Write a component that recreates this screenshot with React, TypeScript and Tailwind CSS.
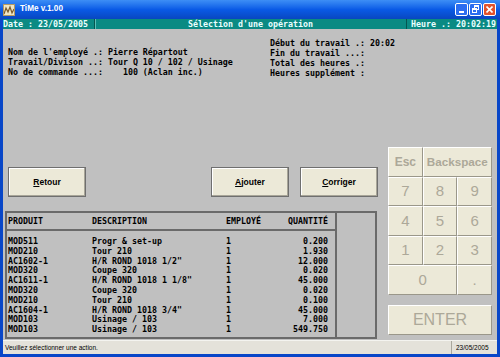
import React from "react";

const mono = "font-['DejaVu_Sans_Mono',monospace] font-bold text-[8.3px]";
const sans = "font-['Liberation_Sans',Arial,sans-serif]";

const rows = [
  ["MOD511", "Progr & set-up", "1", "0.200"],
  ["MOD210", "Tour 210", "1", "1.930"],
  ["AC1602-1", 'H/R ROND 1018 1/2"', "1", "12.000"],
  ["MOD320", "Coupe 320", "1", "0.020"],
  ["AC1611-1", 'H/R ROND 1018 1 1/8"', "1", "45.000"],
  ["MOD320", "Coupe 320", "1", "0.020"],
  ["MOD210", "Tour 210", "1", "0.100"],
  ["AC1604-1", 'H/R ROND 1018 3/4"', "1", "45.000"],
  ["MOD103", "Usinage / 103", "1", "7.000"],
  ["MOD103", "Usinage / 103", "1", "549.750"],
];

const keyCls =
  "flex items-center justify-center bg-[#ece9d8] text-[#aca899] border-t border-l border-t-white border-l-white border-r border-b border-r-[#9a978a] border-b-[#9a978a] " +
  sans;

const ActionButton = ({ first, rest }: { first: string; rest: string }) => (
  <button
    className={`w-[78px] h-[30px] bg-[#ece9d8] border border-[#6f6f6f] shadow-[inset_-1px_-1px_0_#a8a598,inset_1px_1px_0_#ffffff] text-[8.5px] font-bold text-black ${sans}`}
  >
    <span className="underline">{first}</span>
    {rest}
  </button>
);

const TitleBar = () => (
  <div className="h-[19px] flex items-center bg-gradient-to-b from-[#3d8ef5] via-[#0a5ae6] to-[#0847c0] pl-[3px] pr-[4px]">
    <svg width="12" height="12" viewBox="0 0 12 12">
      <rect x="0" y="0" width="12" height="12" fill="#efe6c6" />
      <path d="M1 10 L3 4 L5 8 L7 3 L9 9 L11 5" stroke="#7a5a2a" strokeWidth="1.2" fill="none" />
      <rect x="0.5" y="0.5" width="11" height="11" fill="none" stroke="#b59a62" />
    </svg>
    <span className={`ml-[5px] text-white font-bold text-[8.2px] ${sans}`}>TiMe v.1.00</span>
    <div className="ml-auto flex gap-[1px]">
      <div className="w-[13px] h-[13px] rounded-[2px] border border-white bg-[#2a6df0] flex items-end justify-center pb-[2px]">
        <div className="w-[5px] h-[2px] bg-white" />
      </div>
      <div className="w-[13px] h-[13px] rounded-[2px] border border-white bg-[#2a6df0] relative">
        <div className="absolute left-[4px] top-[1px] w-[5px] h-[5px] border border-white border-t-2" />
        <div className="absolute left-[2px] top-[4px] w-[5px] h-[5px] border border-white border-t-2 bg-[#2a6df0]" />
      </div>
      <div className="w-[13px] h-[13px] rounded-[2px] border border-white bg-[#e1532c] flex items-center justify-center">
        <svg width="7" height="7" viewBox="0 0 7 7">
          <path d="M0.5 0.5 L6.5 6.5 M6.5 0.5 L0.5 6.5" stroke="white" strokeWidth="1.6" />
        </svg>
      </div>
    </div>
  </div>
);

export default function App() {
  return (
    <div className="w-[500px] h-[357px] flex flex-col bg-[#0846c8] overflow-hidden">
      <TitleBar />
      <div className="flex-1 flex flex-col mx-[3px] mb-[3px] bg-[#c0c0c0]">
        <div className={`h-[10px] flex bg-[#0b8a83] text-[#eaffff] leading-[10px] ${mono}`}>
          <div className="w-[92px] border-r border-r-[#055550] shadow-[1px_0_0_#5cc0b8]">Date : 23/05/2005</div>
          <div className="flex-1 text-center">Sélection d'une opération</div>
          <div className="w-[91px] border-l border-l-[#055550] text-right pr-[1px]">Heure .: 20:02:19</div>
        </div>

        <div className={`flex pt-[9px] text-black leading-[10px] whitespace-pre ${mono}`}>
          <div className="mt-[9px] ml-[5px] w-[262px]">
            <div>Nom de l'employé .: Pierre Répartout</div>
            <div>Travail/Divison ..: Tour Q 10 / 102 / Usinage</div>
            <div>No de commande ...:    100 (Aclan inc.)</div>
          </div>
          <div>
            <div>Début du travail .: 20:02</div>
            <div>Fin du travail ...:</div>
            <div>Total des heures .:</div>
            <div>Heures supplément :</div>
          </div>
        </div>

        <div className="flex mt-[69px]">
          <div className="w-[380px] flex flex-col">
            <div className="flex mt-[20px] ml-[5px]">
              <ActionButton first="R" rest="etour" />
              <div className="ml-[125px] flex gap-[11px]">
                <ActionButton first="A" rest="jouter" />
                <ActionButton first="C" rest="orriger" />
              </div>
            </div>
            <div className={`mt-[14px] ml-[2px] w-[372px] h-[128px] border-2 border-[#6a6a6a] flex text-black ${mono}`}>
              <div className="w-[330px] flex flex-col border-r-2 border-r-[#6a6a6a]">
                <div className="h-[18px] flex items-center border-b-2 border-b-[#6a6a6a] pl-[1px] pr-[7px]">
                  <div className="w-[84px]">PRODUIT</div>
                  <div className="w-[134px]">DESCRIPTION</div>
                  <div className="flex-1">EMPLOYÉ</div>
                  <div>QUANTITÉ</div>
                </div>
                <div className="pt-[6px] leading-[9.8px] whitespace-pre">
                  {rows.map((r, i) => (
                    <div key={i} className="flex pl-[1px] pr-[7px]">
                      <div className="w-[84px]">{r[0]}</div>
                      <div className="w-[134px]">{r[1]}</div>
                      <div className="flex-1">{r[2]}</div>
                      <div className="text-right">{r[3]}</div>
                    </div>
                  ))}
                </div>
              </div>
            </div>
          </div>

          <div className="w-[104px] ml-[5px] flex flex-col">
            <div className="h-[148px] grid grid-cols-3 grid-rows-5">
              <div className={`${keyCls} text-[12px] font-bold`}>Esc</div>
              <div className={`${keyCls} col-span-2 text-[11.7px] font-bold`}>Backspace</div>
              {["7", "8", "9", "4", "5", "6", "1", "2", "3"].map((k) => (
                <div key={k} className={`${keyCls} text-[15px]`}>
                  {k}
                </div>
              ))}
              <div className={`${keyCls} col-span-2 text-[15px]`}>0</div>
              <div className={`${keyCls} text-[15px]`}>.</div>
            </div>
            <div className={`${keyCls} mt-[10px] h-[30px] text-[16px]`}>ENTER</div>
          </div>
        </div>

        <div className={`mt-auto h-[14px] flex items-center bg-[#e4e2da] border-t border-t-[#f4f4f0] text-[6.5px] text-black ${sans}`}>
          <div className="flex-1 pl-[2px]">Veuillez sélectionner une action.</div>
          <div className="w-[46px] h-full flex items-center pl-[4px] border-l border-l-[#a9a79c]">23/05/2005</div>
        </div>
      </div>
    </div>
  );
}
